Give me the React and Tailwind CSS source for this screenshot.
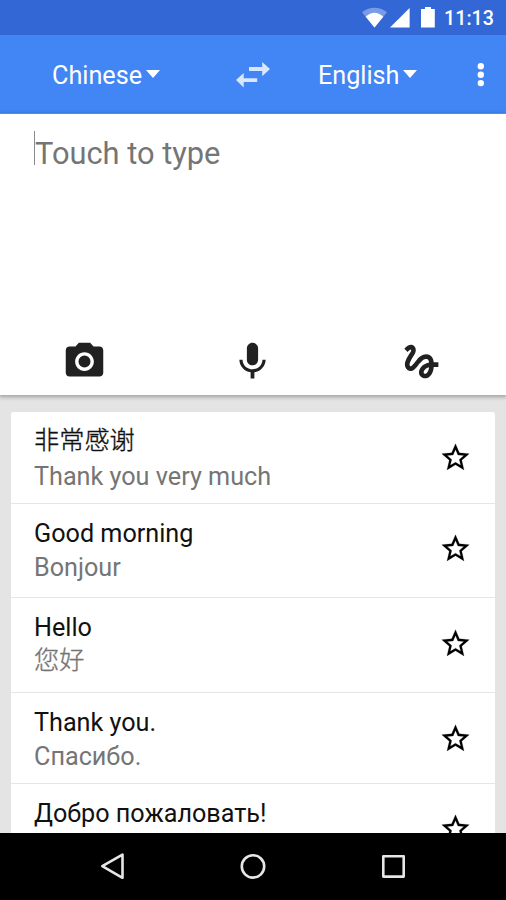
import React from "react";

const STAR =
  "M22 9.24l-7.19-.62L12 2 9.19 8.63 2 9.24l5.46 4.73L5.82 21 12 17.27 18.18 21l-1.63-7.03L22 9.24zM12 15.4l-3.76 2.27 1-4.28-3.32-2.88 4.38-.38L12 6.1l1.71 4.04 4.38.38-3.32 2.88 1 4.28L12 15.4z";
const CAMERA =
  "M12 8.8a3.2 3.2 0 1 0 0 6.4a3.2 3.2 0 1 0 0-6.4zM9 2L7.17 4H4c-1.1 0-2 .9-2 2v12c0 1.1.9 2 2 2h16c1.1 0 2-.9 2-2V6c0-1.1-.9-2-2-2h-3.17L15 2H9zm3 15c-2.76 0-5-2.24-5-5s2.24-5 5-5 5 2.24 5 5-2.24 5-5 5z";
const MIC =
  "M12 14c1.66 0 2.99-1.34 2.99-3L15 5c0-1.66-1.34-3-3-3S9 3.34 9 5v6c0 1.66 1.34 3 3 3zm5.3-3c0 3-2.54 5.1-5.3 5.1S6.7 14 6.7 11H5c0 3.41 2.72 6.23 6 6.72V21h2v-3.28c3.28-.48 6-3.3 6-6.72h-1.7z";
const GESTURE =
  "M4.59 6.89c.7-.71 1.4-1.35 1.71-1.22.5.2 0 1.03-.3 1.52-.25.42-2.86 3.89-2.86 6.31 0 1.28.48 2.34 1.34 2.98.75.56 1.74.73 2.64.46 1.07-.31 1.95-1.4 3.06-2.77 1.21-1.49 2.83-3.44 4.08-3.44 1.63 0 1.65 1.01 1.76 1.79-3.78.64-5.38 3.67-5.38 5.37 0 1.7 1.44 3.09 3.21 3.09 1.63 0 4.29-1.33 4.69-6.1H21v-2.5h-2.47c-.15-1.65-1.09-4.2-4.03-4.2-2.25 0-4.18 1.91-4.94 2.84-.58.73-2.06 2.48-2.29 2.72-.25.3-.68.84-1.11.84-.45 0-.72-.83-.36-1.92.35-1.09 1.4-2.86 1.85-3.52.78-1.14 1.3-1.92 1.3-3.28C8.95 3.69 7.31 3 6.44 3 5.12 3 3.97 4 3.72 4.25c-.36.36-.66.66-.88.93l1.75 1.71zm9.29 11.66c-.31 0-.74-.26-.74-.72 0-.6.73-2.2 2.87-2.76-.3 2.69-1.43 3.48-2.13 3.48z";

function Icon({ d, className }) {
  return (
    <svg viewBox="0 0 24 24" className={className} fill="currentColor">
      <path d={d} />
    </svg>
  );
}

function StatusBar() {
  return (
    <div className="flex h-[35px] shrink-0 items-start bg-[#3367d6] pl-[362px] text-white">
      <svg className="mt-[7px] h-[21px] w-[74px] shrink-0" viewBox="362 7 74 21" fill="currentColor">
        <path d="M362 12.2Q374.4 3.4 387 12.2L374.5 27.5z" opacity=".35" />
        <path d="M365.7 16.8Q374.4 8.8 383.3 16.8L374.5 27.5z" />
        <path d="M409.6 8v19.6H390z" />
        <path d="M425 7h6v2h3.8v18.6H421V9h4z" />
      </svg>
      <span className="ml-[8px] mt-[7px] whitespace-nowrap text-[19.7px] font-medium leading-[24px]">11:13</span>
    </div>
  );
}

function Language({ name, className }) {
  return (
    <button className={`flex items-start ${className}`}>
      <span className="whitespace-nowrap text-[25.2px] leading-[30px]">{name}</span>
      <svg className="mt-[9px] h-[8px] w-[14px] shrink-0" viewBox="0 0 14 8" fill="currentColor">
        <path d="M0 0h14L7 8z" />
      </svg>
    </button>
  );
}

function Toolbar() {
  return (
    <div className="flex h-[79px] shrink-0 items-start border-b border-[#679ef8] bg-[#4285f4] text-white">
      <Language name="Chinese" className="ml-[52px] mt-[26px] w-[108px] justify-between" />
      <svg className="ml-[76px] mt-[27px] h-[26px] w-[34px] shrink-0 text-[#d9e6fd]" viewBox="236 62 34 26" fill="currentColor">
        <path d="M249 67.1h13.2V62l7.8 7.1-7.8 7.1v-5.2H249zM257.2 78.2V82h-13.5v5.4L236 80.1l7.7-7v5.1z" />
      </svg>
      <Language name="English" className="ml-[48px] mt-[26px] w-[99px] justify-between" />
      <svg className="ml-[60px] mt-[27px] h-[26px] w-[8px] shrink-0" viewBox="477 62 8 26" fill="currentColor">
        <circle cx="480.8" cy="66.3" r="3.2" />
        <circle cx="480.8" cy="74.7" r="3.2" />
        <circle cx="480.8" cy="83.1" r="3.2" />
      </svg>
    </div>
  );
}

function InputPanel() {
  return (
    <div className="relative z-10 flex h-[281px] shrink-0 flex-col justify-between bg-white shadow-[0_1px_4px_1px_rgba(0,0,0,0.3)]">
      <div className="flex items-start pl-[34px] pt-[17px]">
        <div className="h-[34px] w-px bg-[#8a8a8a]" />
        <span className="mt-[5px] whitespace-nowrap text-[30.8px] leading-[36px] text-[#757575]">Touch to type</span>
      </div>
      <div className="mb-[11px] grid grid-cols-3 justify-items-center text-[#212121]">
        <Icon d={CAMERA} className="size-[45px]" />
        <Icon d={MIC} className="size-[45px]" />
        <Icon d={GESTURE} className="size-[45px]" />
      </div>
    </div>
  );
}

const rows = [
  { source: "非常感谢", target: "Thank you very much", box: "h-[92px] pt-[14px]", sourceStyle: "font-light [-webkit-text-stroke:0.35px]", targetStyle: "mt-[6px]", star: "mt-[15px]" },
  { source: "Good morning", target: "Bonjour", box: "h-[94px] pt-[15px]", sourceStyle: "", targetStyle: "mt-[4px]", star: "mt-[13px]" },
  { source: "Hello", target: "您好", box: "h-[95px] pt-[15px]", sourceStyle: "", targetStyle: "mt-[3px] font-light [-webkit-text-stroke:0.35px]", star: "mt-[14px]" },
  { source: "Thank you.", target: "Спасибо.", box: "h-[91px] pt-[15px]", sourceStyle: "", targetStyle: "mt-[4px]", star: "mt-[14px]" },
  { source: "Добро пожаловать!", target: "", box: "h-[91px] pt-[15px]", sourceStyle: "", targetStyle: "", star: "mt-[13px]" },
];

function History() {
  return (
    <div className="h-[438px] overflow-hidden bg-[#e4e4e4] px-[11px] pt-[17px]">
      <div className="overflow-hidden rounded-t-[3px] bg-white">
        {rows.map((r) => (
          <div key={r.source} className={`flex justify-between border-b border-[#e6e6e6] px-[23px] ${r.box}`}>
            <div className="whitespace-nowrap text-[25.2px] leading-[30px]">
              <div className={`h-[30px] text-[#111] ${r.sourceStyle}`}>{r.source}</div>
              <div className={`h-[30px] text-[#757575] ${r.targetStyle}`}>{r.target}</div>
            </div>
            <svg viewBox="0 0 24 24" className={`size-[33px] shrink-0 text-black ${r.star}`} fill="currentColor" stroke="currentColor" strokeWidth="0.15">
              <path d={STAR} />
            </svg>
          </div>
        ))}
      </div>
    </div>
  );
}

function NavBar() {
  return (
    <div className="flex h-[67px] shrink-0 items-start justify-between bg-black px-[98px] pt-[18px] text-[#e6e6e6]">
      <svg className="h-[32px] w-[30px]" viewBox="98 851 30 32" fill="none" stroke="currentColor" strokeWidth="2.6" strokeLinejoin="round">
        <path d="M122.5 854.6v23.2L102.3 866.2z" />
      </svg>
      <svg className="h-[32px] w-[30px]" viewBox="238 851 30 32" fill="none" stroke="currentColor" strokeWidth="2.6">
        <circle cx="253" cy="866.4" r="11.2" />
      </svg>
      <svg className="h-[32px] w-[30px]" viewBox="378 851 30 32" fill="none" stroke="currentColor" strokeWidth="2.6" strokeLinejoin="round">
        <path d="M383.3 856.2h20.4v20.4h-20.4z" />
      </svg>
    </div>
  );
}

export default function App() {
  return (
    <div className="flex h-[900px] w-[506px] flex-col overflow-hidden bg-white font-[Roboto,'Noto_Sans_CJK_SC',sans-serif]">
      <StatusBar />
      <Toolbar />
      <InputPanel />
      <History />
      <NavBar />
    </div>
  );
}
